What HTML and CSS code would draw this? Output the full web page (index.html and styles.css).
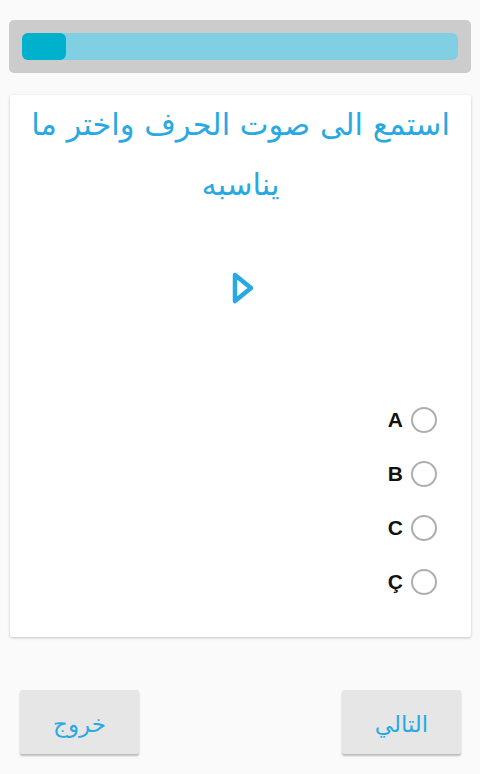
FILE: index.html
```html
<!DOCTYPE html>
<html lang="ar" dir="rtl">

<head>
    <meta charset="UTF-8">
    <title>اختبار الحروف</title>
    <link rel="stylesheet" href="styles.css">
</head>

<body>

    <div class="progress-box">
        <div class="progress-track">
            <div class="progress-fill"></div>
        </div>
    </div>

    <div class="card">
        <div class="question">استمع الى صوت الحرف واختر ما يناسبه</div>

        <div class="play">
            <svg width="24" height="34" viewBox="0 0 24 34">
                <path d="M4 4 L20 17 L4 30 Z" fill="none" stroke="#29a9e1" stroke-width="4.5"
                    stroke-linejoin="round" />
            </svg>
        </div>

        <div class="options">
            <label class="option"><span class="radio"></span><span class="letter">A</span></label>
            <label class="option"><span class="radio"></span><span class="letter">B</span></label>
            <label class="option"><span class="radio"></span><span class="letter">C</span></label>
            <label class="option"><span class="radio"></span><span class="letter">Ç</span></label>
        </div>
    </div>

    <div class="buttons">
        <button class="btn">التالي</button>
        <button class="btn">خروج</button>
    </div>

</body>

</html>
```

FILE: styles.css
```css
body {
    margin: 0;
    background: #fafafa;
    font-family: "DejaVu Sans", sans-serif;
    height: 774px;
}

.progress-box {
    margin: 20px 9px 0 9px;
    height: 53px;
    background: #cccccc;
    border-radius: 5px;
    padding: 13px;
    box-sizing: border-box;
}

.progress-track {
    height: 27px;
    background: #80cfe3;
    border-radius: 6px;
    direction: ltr;
    display: flex;
}

.progress-fill {
    width: 44px;
    background: #00b1cd;
    border-radius: 6px;
}

.card {
    margin: 22px 9px 0 10px;
    height: 542px;
    background: #fff;
    border-radius: 2px;
    box-shadow: 0 1px 3px rgba(0, 0, 0, 0.22);
    box-sizing: border-box;
}

.question {
    color: #29a9e1;
    font-size: 30.5px;
    line-height: 60px;
    text-align: center;
    padding: 0 16px;
}

.play {
    display: flex;
    justify-content: center;
    margin-top: 56px;
    padding-left: 4px;
}

.options {
    margin-top: 102px;
    padding-right: 34px;
    display: flex;
    flex-direction: column;
    gap: 28px;
}

.option {
    display: flex;
    align-items: center;
    gap: 8px;
    height: 26px;
}

.radio {
    width: 22px;
    height: 22px;
    border: 2px solid #aeaeae;
    border-radius: 50%;
}

.letter {
    font-family: "Liberation Sans", sans-serif;
    font-weight: bold;
    font-size: 21px;
    color: #111;
}

.buttons {
    display: flex;
    justify-content: space-between;
    padding: 0 19px 0 20px;
    margin-top: 53px;
}

.btn {
    width: 119px;
    height: 64px;
    border: none;
    background: #e6e6e6;
    box-shadow: 0 2px 2px rgba(0, 0, 0, 0.25);
    color: #29a9e1;
    font-family: "DejaVu Sans", sans-serif;
    font-size: 23px;
    padding-top: 4px;
    border-radius: 2px;
}
```
